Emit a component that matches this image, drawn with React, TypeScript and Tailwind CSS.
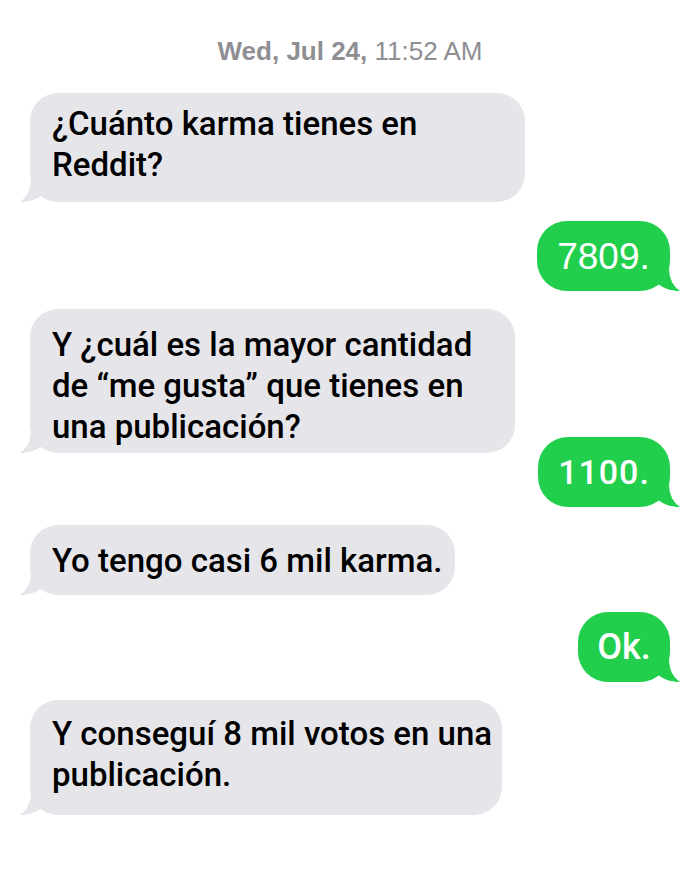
import React from "react";

const GRAY = "#e5e5ea";
const GREEN = "#22cf4d";

const LeftTail = () => (
  <svg className="absolute bottom-0 left-[-10px]" width="24" height="24" viewBox="0 0 24 24">
    <path d="M11 0 C11 12 7 19 0 24 C8 24 15 22 22 17 L22 0 Z" fill={GRAY} />
  </svg>
);

const RightTail = () => (
  <svg className="absolute bottom-0 right-[-10px]" width="24" height="24" viewBox="0 0 24 24">
    <path d="M13 0 C13 12 17 19 24 24 C16 24 9 22 2 17 L2 0 Z" fill={GREEN} />
  </svg>
);

const Received = ({ children, className }: { children: React.ReactNode; className: string }) => (
  <div className={`relative ml-[30px] rounded-[28px] bg-[#e5e5ea] pl-[22px] whitespace-nowrap text-[33px] font-medium leading-[41px] text-black ${className}`}>
    {children}
    <LeftTail />
  </div>
);

const Sent = ({ children, className }: { children: React.ReactNode; className: string }) => (
  <div className={`relative self-end mr-[30px] rounded-[30px] bg-[#22cf4d] text-white flex items-center justify-center ${className}`}>
    {children}
    <RightTail />
  </div>
);

export default function App() {
  return (
    <div className="w-[700px] h-[895px] bg-white flex flex-col" style={{ fontFamily: "Roboto, 'Noto Sans', sans-serif" }}>
      <div className="pt-[37px] text-center text-[26px] leading-[28px] text-[#8e8e93]" style={{ fontFamily: "'Liberation Sans', Arial, sans-serif" }}>
        <span className="font-bold">Wed, Jul 24,</span> 11:52 AM
      </div>

      <Received className="mt-[28px] w-[495px] pt-[10px] pb-[17px]">
        ¿Cuánto karma tienes en
        <br />
        Reddit?
      </Received>

      <Sent className="mt-[19px] w-[133px] h-[70px]">
        <span className="text-[37px] leading-none" style={{ fontFamily: "'Liberation Sans', Arial, sans-serif" }}>7809.</span>
      </Sent>

      <Received className="mt-[18px] w-[485px] pt-[15px] pb-[6px]">
        Y ¿cuál es la mayor cantidad
        <br />
        de “me gusta” que tienes en
        <br />
        una publicación?
      </Received>

      <Sent className="-mt-[16px] w-[132px] h-[70px]">
        <span className="text-[34px] font-medium leading-none tracking-[1px]">1100.</span>
      </Sent>

      <Received className="mt-[18px] w-[425px] h-[70px] flex items-center">
        Yo tengo casi 6 mil karma.
      </Received>

      <Sent className="mt-[17px] w-[92px] h-[70px]">
        <span className="text-[36px] font-medium leading-none">Ok.</span>
      </Sent>

      <Received className="mt-[18px] w-[472px] pt-[13px] pb-[20px]">
        Y conseguí 8 mil votos en una
        <br />
        publicación.
      </Received>
    </div>
  );
}
